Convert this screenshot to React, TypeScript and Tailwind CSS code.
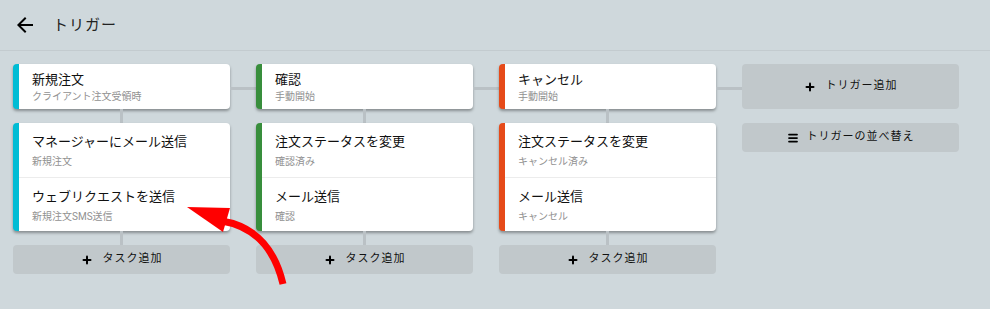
import { Plus, Menu } from "lucide-react"

type Task = { title: string; sub: string }
type Trigger = { title: string; sub: string; accent: string; tasks: Task[] }

const TRIGGERS: Trigger[] = [
  {
    title: "新規注文",
    sub: "クライアント注文受領時",
    accent: "border-[#00bcd4]",
    tasks: [
      { title: "マネージャーにメール送信", sub: "新規注文" },
      { title: "ウェブリクエストを送信", sub: "新規注文SMS送信" },
    ],
  },
  {
    title: "確認",
    sub: "手動開始",
    accent: "border-[#388e3c]",
    tasks: [
      { title: "注文ステータスを変更", sub: "確認済み" },
      { title: "メール送信", sub: "確認" },
    ],
  },
  {
    title: "キャンセル",
    sub: "手動開始",
    accent: "border-[#e64a19]",
    tasks: [
      { title: "注文ステータスを変更", sub: "キャンセル済み" },
      { title: "メール送信", sub: "キャンセル" },
    ],
  },
]

function VLine() {
  return <div className="mx-auto h-[14px] w-[3px] bg-[#bac1c5]" />
}

function Connector() {
  return (
    <div className="w-[26px] shrink-0">
      <div className="mt-[23px] h-[3px] w-full bg-[#bac1c5]" />
    </div>
  )
}

function TriggerColumn({ t }: { t: Trigger }) {
  return (
    <div className="flex w-[217px] shrink-0 flex-col">
      <div className={`h-[45px] rounded-[4px] border-l-[6px] ${t.accent} bg-white pl-[13px] pt-[7px] shadow-[0_2px_3px_rgba(0,0,0,0.35)]`}>
        <div className="text-[13px] leading-[17px] text-[#111]">{t.title}</div>
        <div className="mt-[2px] text-[10px] leading-[13px] text-[#919191]">{t.sub}</div>
      </div>
      <VLine />
      <div className={`rounded-[4px] border-l-[6px] ${t.accent} bg-white shadow-[0_2px_3px_rgba(0,0,0,0.35)]`}>
        {t.tasks.map((k, i) => (
          <div
            key={i}
            className={`h-[54px] pl-[13px] pt-[10px] ${i > 0 ? "border-t border-[#ececec]" : ""}`}
          >
            <div className="text-[13px] leading-[17px] text-[#111]">{k.title}</div>
            <div className="mt-[5px] text-[10px] leading-[13px] text-[#919191]">{k.sub}</div>
          </div>
        ))}
      </div>
      <VLine />
      <button className="flex h-[29px] items-center justify-center gap-[10px] rounded-[4px] bg-[#c1c8cb] text-[11px] tracking-[1px] text-[#111]">
        <Plus size={12} strokeWidth={4} className="text-black" />
        <span>タスク追加</span>
      </button>
    </div>
  )
}

export default function App() {
  return (
    <div className="relative h-[309px] w-[990px] overflow-hidden bg-[#cfd8dc] font-[Roboto,'Noto_Sans_CJK_JP',sans-serif]">
      <header className="flex h-[51px] items-center border-b border-[#c3cbcf] pl-[13px]">
        <svg width="24" height="24" viewBox="0 0 24 24" className="text-black">
          <path fill="currentColor" d="M20 11H7.83l5.59-5.59L12 4l-8 8 8 8 1.41-1.41L7.83 13H20v-2z" />
        </svg>
        <h1 className="ml-[16px] text-[15px] tracking-[1px] text-[#222]">トリガー</h1>
      </header>

      <div className="flex pl-[13px] pt-[13px]">
        {TRIGGERS.map((t, i) => (
          <div key={i} className="flex">
            <TriggerColumn t={t} />
            <Connector />
          </div>
        ))}
        <div className="flex w-[217px] flex-col gap-[14px]">
          <button className="flex h-[45px] items-center justify-center gap-[10px] rounded-[4px] bg-[#c1c8cb] text-[11px] tracking-[1px] text-[#111]">
            <Plus size={12} strokeWidth={4} className="text-black" />
            <span>トリガー追加</span>
          </button>
          <button className="flex h-[29px] items-center justify-center gap-[8px] rounded-[4px] bg-[#c1c8cb] text-[11px] tracking-[1px] text-[#111]">
            <Menu size={12} strokeWidth={3.5} className="text-black" />
            <span>トリガーの並べ替え</span>
          </button>
        </div>
      </div>

      <svg className="pointer-events-none absolute left-0 top-0" width="990" height="309">
        <path d="M222 221 C 252 226, 274 246, 283 284" fill="none" stroke="#ff0000" strokeWidth="7" />
        <polygon points="187,207 230,208 223,232" fill="#ff0000" />
      </svg>
    </div>
  )
}
